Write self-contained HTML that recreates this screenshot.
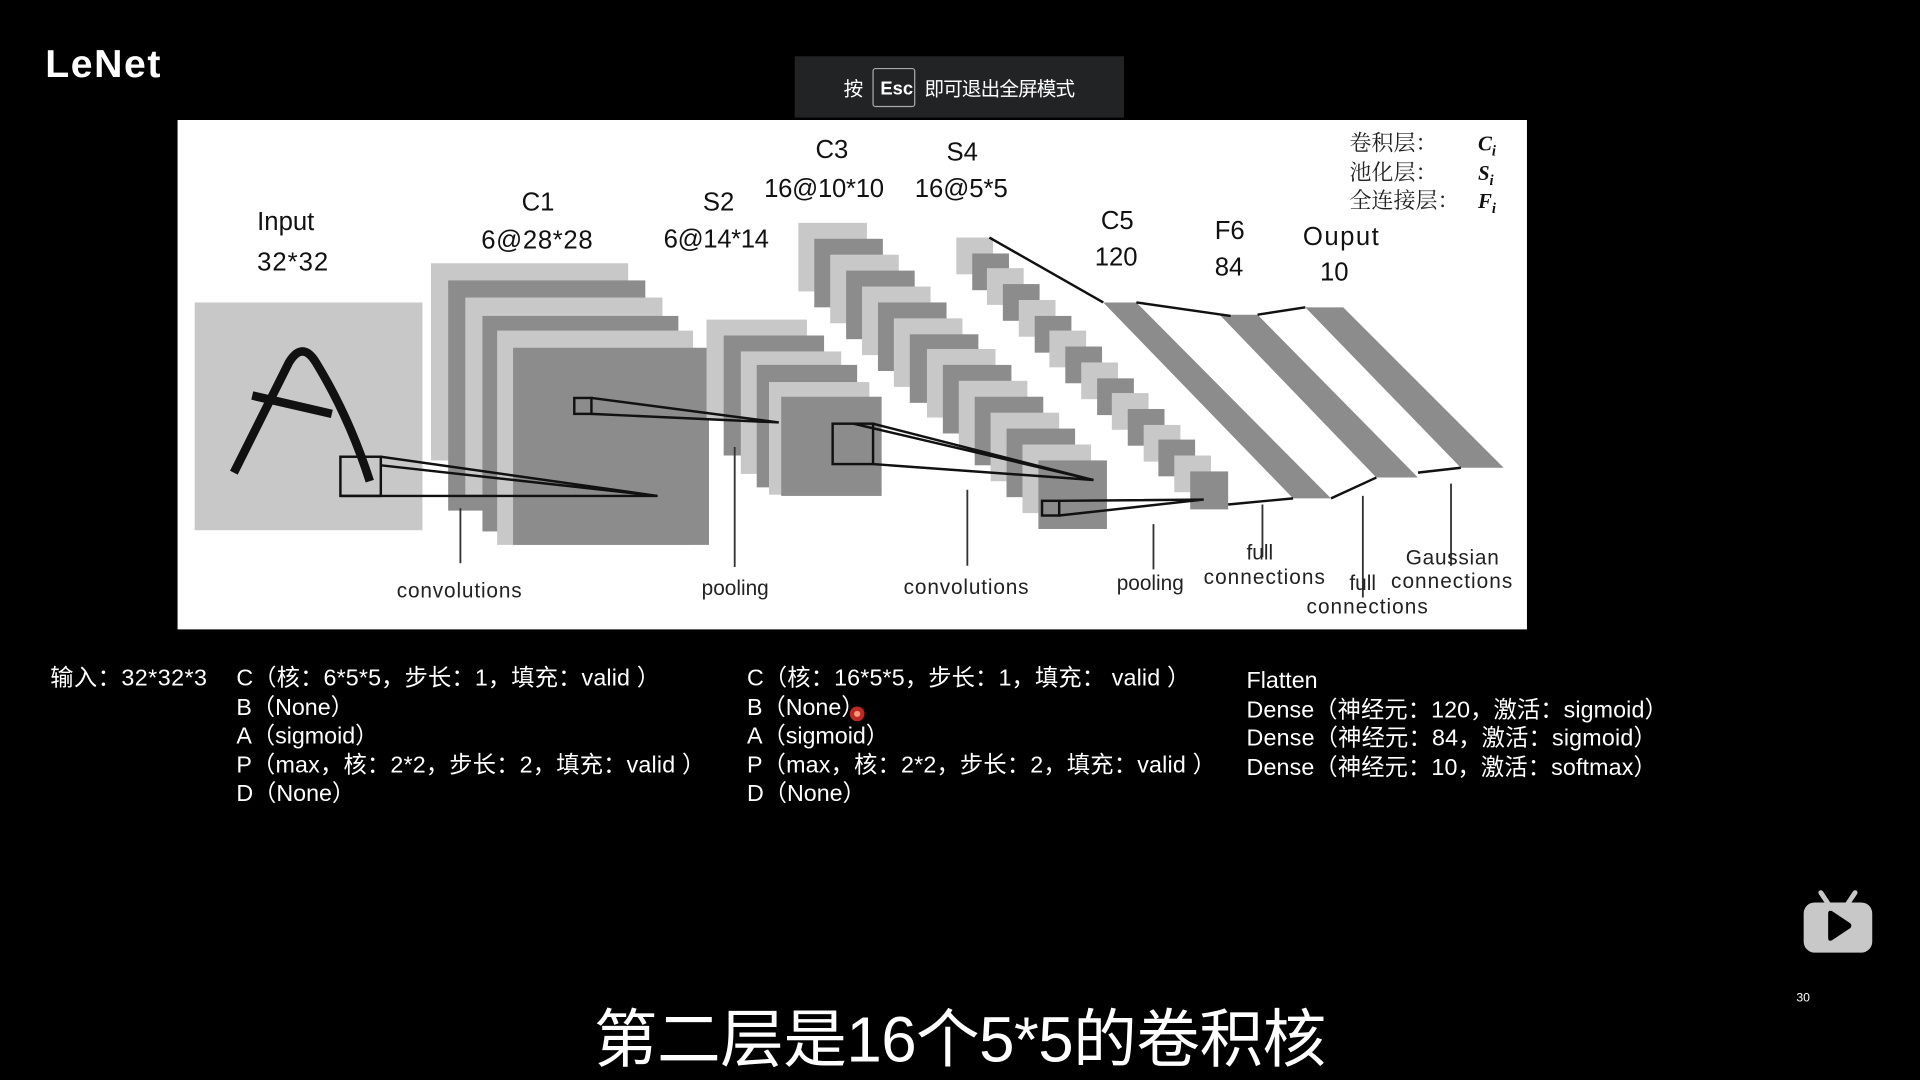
<!DOCTYPE html>
<html><head><meta charset="utf-8"><style>
html,body{margin:0;padding:0;background:#000;width:1920px;height:1080px;overflow:hidden}
svg{display:block}
text{font-family:"Liberation Sans","Noto Sans CJK SC",sans-serif}
.l{fill:#c8c8c8}.d{fill:#8c8c8c}
.dl{font-size:21px;fill:#111}
.sl{font-size:17px;fill:#222}
.w{font-size:19px;fill:#fff}
.ln{stroke:#111;stroke-width:2;fill:none}
.tk{stroke:#333;stroke-width:1.5}
</style></head><body>
<svg width="1920" height="1080" viewBox="0 0 1568 882" xmlns="http://www.w3.org/2000/svg">
<rect width="1568" height="882" fill="#000"/>
<text x="37" y="63" style="font-size:32px;font-weight:bold;fill:#fff" textLength="94">LeNet</text>
<rect x="145" y="98" width="1102" height="416" fill="#fff"/>
<rect x="649" y="46" width="269" height="50" fill="#222325"/>
<text x="689" y="78" style="font-size:16px;fill:#fff">按</text>
<rect x="713" y="56" width="34" height="31" rx="2" fill="none" stroke="#aaa" stroke-width="1"/>
<text x="719" y="77" style="font-size:15px;font-weight:bold;fill:#fff">Esc</text>
<text x="755" y="78" style="font-size:16px;fill:#fff" textLength="123">即可退出全屏模式</text>
<!-- input -->
<rect x="159" y="247" width="186" height="186" class="l"/>
<path d="M191 386 L236 296 Q247 278 258 296 Q285 340 302 393" stroke="#111" stroke-width="7" fill="none"/>
<path d="M206 323 L271 338" stroke="#111" stroke-width="7"/>
<!-- C1 -->
<rect x="352" y="215" width="161" height="161" class="l"/>
<rect x="366" y="229" width="161" height="188" class="d"/>
<rect x="380" y="243" width="161" height="161" class="l"/>
<rect x="394" y="258" width="160" height="176" class="d"/>
<rect x="406" y="270" width="160" height="175" class="l"/>
<rect x="419" y="284" width="160" height="161" class="d"/>
<!-- S2 -->
<rect x="577" y="261" width="82" height="82" class="l"/>
<rect x="591" y="274" width="82" height="98" class="d"/>
<rect x="605" y="287" width="82" height="100" class="l"/>
<rect x="618" y="298" width="82" height="100" class="d"/>
<rect x="628" y="312" width="82" height="92" class="l"/>
<rect x="638" y="324" width="82" height="81" class="d"/>
<!-- C3 -->
<g>
<rect x="652" y="182" width="56" height="56" class="l"/><rect x="665" y="195" width="56" height="56" class="d"/>
<rect x="678" y="208" width="56" height="56" class="l"/><rect x="691" y="221" width="56" height="56" class="d"/>
<rect x="704" y="234" width="56" height="56" class="l"/><rect x="717" y="247" width="56" height="56" class="d"/>
<rect x="730" y="260" width="56" height="56" class="l"/><rect x="743" y="273" width="56" height="56" class="d"/>
<rect x="757" y="285" width="56" height="56" class="l"/><rect x="770" y="298" width="56" height="56" class="d"/>
<rect x="783" y="311" width="56" height="56" class="l"/><rect x="796" y="324" width="56" height="56" class="d"/>
<rect x="809" y="337" width="56" height="56" class="l"/><rect x="822" y="350" width="56" height="56" class="d"/>
<rect x="835" y="363" width="56" height="56" class="l"/><rect x="848" y="376" width="56" height="56" class="d"/>
</g>
<!-- S4 -->
<g>
<rect x="781" y="194" width="30" height="30" class="l"/><rect x="794" y="207" width="30" height="30" class="d"/>
<rect x="806" y="219" width="30" height="30" class="l"/><rect x="819" y="232" width="30" height="30" class="d"/>
<rect x="832" y="245" width="30" height="30" class="l"/><rect x="845" y="258" width="30" height="30" class="d"/>
<rect x="857" y="270" width="30" height="30" class="l"/><rect x="870" y="283" width="30" height="30" class="d"/>
<rect x="883" y="296" width="30" height="30" class="l"/><rect x="896" y="309" width="30" height="30" class="d"/>
<rect x="908" y="321" width="30" height="30" class="l"/><rect x="921" y="334" width="30" height="30" class="d"/>
<rect x="934" y="347" width="30" height="30" class="l"/><rect x="946" y="359" width="30" height="30" class="d"/>
<rect x="959" y="372" width="30" height="30" class="l"/><rect x="972" y="385" width="31" height="31" class="d"/>
</g>
<!-- bands -->
<polygon points="901,247 928,247 1087,407 1056,407" class="d"/>
<polygon points="996,257 1027,257 1158,390 1124,390" class="d"/>
<polygon points="1066,251 1097,251 1228,382 1193,382" class="d"/>
<path class="ln" d="M808 194 L901 247 M928 247 L1005 258 M1027 257 L1066 251 M1003 412 L1056 407 M1087 407 L1124 390 M1158 386 L1193 382"/>
<rect x="278" y="373" width="33" height="32" class="ln"/>
<path class="ln" d="M311 373 L537 405 L278 405 M311 380 L537 405"/>
<rect x="469" y="325" width="14" height="13" class="ln"/>
<path class="ln" d="M483 325 L636 345 L483 338"/>
<rect x="680" y="346" width="33" height="33" class="ln"/>
<path class="ln" d="M713 346 L893 392 L713 379 M697 346 L893 392"/>
<rect x="851" y="409" width="14" height="12" class="ln"/>
<path class="ln" d="M865 409 L983 408 L865 421"/>
<path class="tk" d="M376 415 V460 M600 365 V463 M790 400 V462 M942 428 V465 M1031 412 V455 M1113 405 V488 M1185 395 V462"/>
<!-- diagram labels -->
<text class="dl" x="210" y="188">Input</text>
<text class="dl" x="210" y="221" textLength="58">32*32</text>
<text class="dl" x="426" y="172">C1</text>
<text class="dl" x="393" y="203" textLength="91">6@28*28</text>
<text class="dl" x="574" y="172">S2</text>
<text class="dl" x="542" y="202" textLength="86">6@14*14</text>
<text class="dl" x="666" y="129">C3</text>
<text class="dl" x="624" y="161" textLength="98">16@10*10</text>
<text class="dl" x="773" y="131">S4</text>
<text class="dl" x="747" y="161" textLength="76">16@5*5</text>
<text class="dl" x="899" y="187">C5</text>
<text class="dl" x="894" y="217">120</text>
<text class="dl" x="992" y="195">F6</text>
<text class="dl" x="992" y="225">84</text>
<text class="dl" x="1064" y="200" textLength="62">Ouput</text>
<text class="dl" x="1078" y="229">10</text>
<text class="sl" x="324" y="488" textLength="102">convolutions</text>
<text class="sl" x="573" y="486">pooling</text>
<text class="sl" x="738" y="485" textLength="102">convolutions</text>
<text class="sl" x="912" y="482">pooling</text>
<text class="sl" x="1018" y="457">full</text>
<text class="sl" x="983" y="477" textLength="99">connections</text>
<text class="sl" x="1102" y="482">full</text>
<text class="sl" x="1067" y="501" textLength="99">connections</text>
<text class="sl" x="1148" y="461" textLength="76">Gaussian</text>
<text class="sl" x="1136" y="480" textLength="99">connections</text>
<!-- legend -->
<g style="font-size:18px;fill:#222">
<text x="1102" y="123" style="font-family:'Noto Serif CJK SC',serif">卷积层：</text>
<text x="1102" y="147" style="font-family:'Noto Serif CJK SC',serif">池化层：</text>
<text x="1102" y="170" style="font-family:'Noto Serif CJK SC',serif">全连接层：</text>
</g>
<g style="font-size:17px;fill:#111;font-style:italic;font-weight:bold">
<text x="1207" y="123" style="font-family:'Liberation Serif',serif">C<tspan font-size="12" dy="4">i</tspan></text>
<text x="1207" y="147" style="font-family:'Liberation Serif',serif">S<tspan font-size="12" dy="4">i</tspan></text>
<text x="1207" y="170" style="font-family:'Liberation Serif',serif">F<tspan font-size="12" dy="4">i</tspan></text>
</g>
<!-- bottom text -->
<text class="w" x="41" y="560" textLength="128">输入：32*32*3</text>
<text class="w" x="193" y="560" textLength="346">C（核：6*5*5，步长：1，填充：valid ）</text>
<text class="w" x="193" y="584">B（None）</text>
<text class="w" x="193" y="607">A（sigmoid）</text>
<text class="w" x="193" y="631" textLength="383">P（max，核：2*2，步长：2，填充：valid ）</text>
<text class="w" x="193" y="654">D（None）</text>
<text class="w" x="610" y="560" textLength="362">C（核：16*5*5，步长：1，填充： valid ）</text>
<text class="w" x="610" y="584">B（None）</text>
<text class="w" x="610" y="607">A（sigmoid）</text>
<text class="w" x="610" y="631" textLength="383">P（max，核：2*2，步长：2，填充：valid ）</text>
<text class="w" x="610" y="654">D（None）</text>
<circle cx="700" cy="583" r="6" fill="#e0302a" opacity="0.85"/>
<circle cx="700" cy="583" r="2.5" fill="#ff9a7a"/>
<text class="w" x="1018" y="562">Flatten</text>
<text class="w" x="1018" y="586" textLength="344">Dense（神经元：120，激活：sigmoid）</text>
<text class="w" x="1018" y="609" textLength="335">Dense（神经元：84，激活：sigmoid）</text>
<text class="w" x="1018" y="633" textLength="335">Dense（神经元：10，激活：softmax）</text>
<!-- tv icon -->
<path d="M1487 729 L1493 738 M1515 729 L1509 738" stroke="#c8c8c8" stroke-width="4" stroke-linecap="round"/>
<rect x="1473" y="737" width="56" height="41" rx="9" fill="#c8c8c8"/>
<path d="M1493 746 Q1493 743 1496 744 L1511 754 Q1513 756 1511 758 L1496 768 Q1493 769 1493 766 Z" fill="#000"/>
<text x="1467" y="818" style="font-size:10px;fill:#fff">30</text>
<!-- subtitle -->
<text x="784" y="867" text-anchor="middle" style="font-size:52px;fill:#fff" textLength="598">第二层是16个5*5的卷积核</text>
</svg>
</body></html>
